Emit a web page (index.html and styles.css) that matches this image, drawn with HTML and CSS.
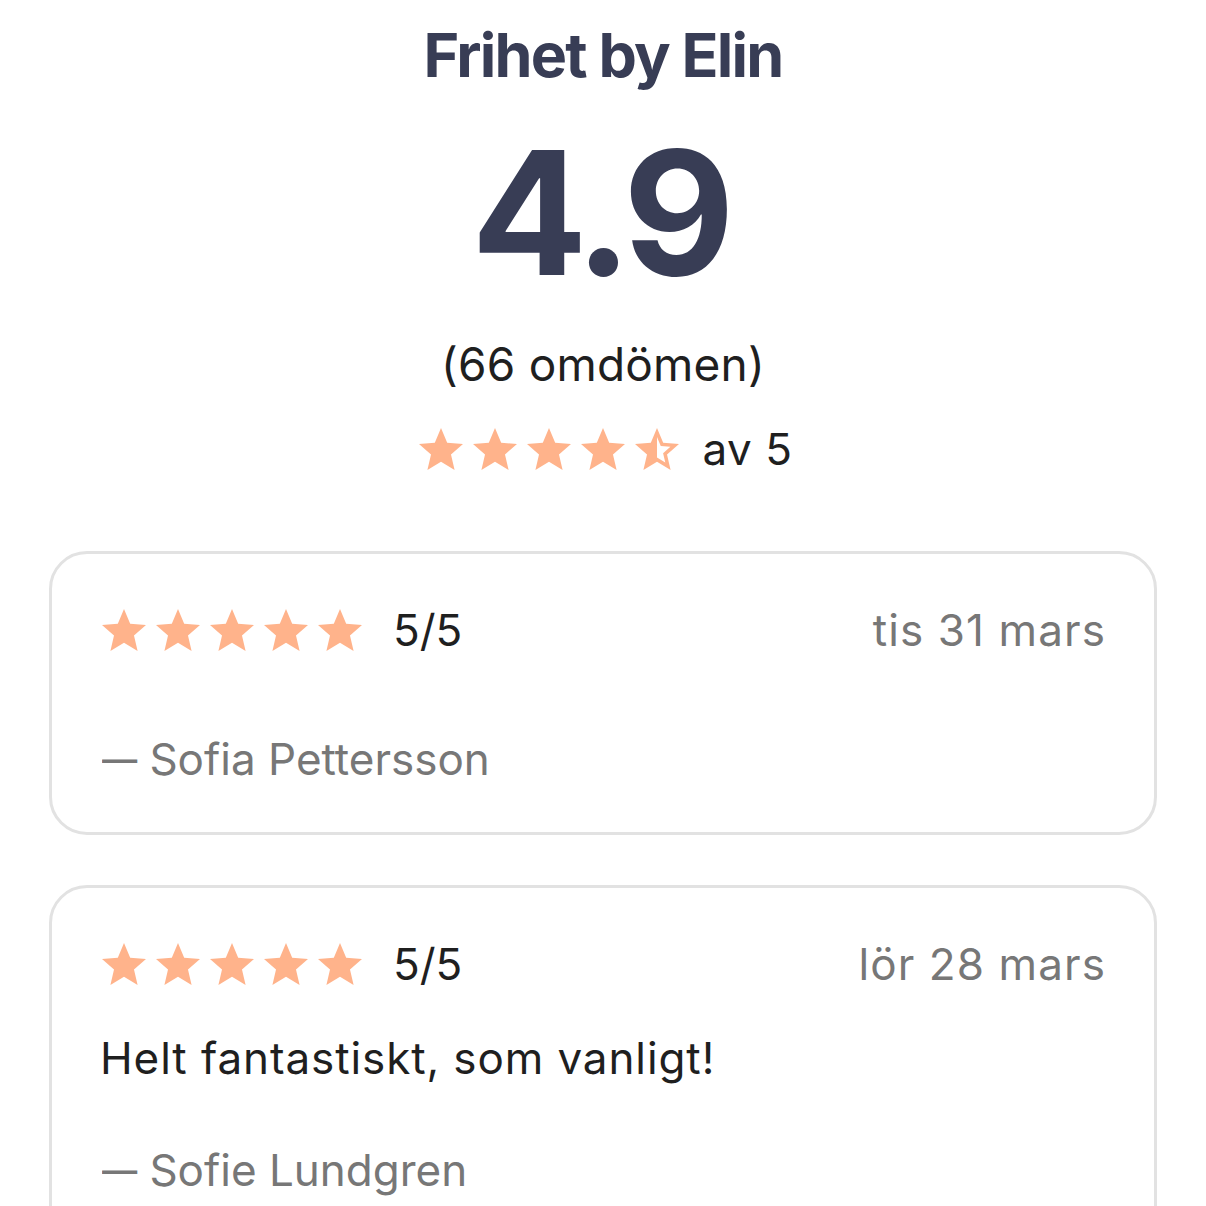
FILE: index.html
```html
<!DOCTYPE html>
<html lang="sv">
<head>
  <meta charset="UTF-8">
  <meta name="viewport" content="width=device-width, initial-scale=1">
  <title>Frihet by Elin – omdömen</title>
  <link rel="stylesheet" href="styles.css">
</head>
<body>

  <svg class="defs" width="0" height="0" aria-hidden="true">
    <defs>
      <path id="star" d="M12 17.27L18.18 21l-1.64-7.03L22 9.24l-7.19-.61L12 2 9.19 8.63 2 9.24l5.46 4.73L5.82 21z"/>
      <path id="star-half" d="M22 9.24l-7.19-.62L12 2 9.19 8.63 2 9.24l5.46 4.73L5.82 21 12 17.27 18.18 21l-1.63-7.03L22 9.24zM12 15.4V6.1l1.71 4.04 4.38.38-3.32 2.88 1 4.28L12 15.4z"/>
    </defs>
  </svg>

  <header class="summary">
    <h1 class="salon-name">Frihet by Elin</h1>
    <div class="score">4.9</div>
    <div class="count">(66 omdömen)</div>
    <div class="rating-row">
      <div class="stars">
        <svg class="star" viewBox="2 2 20 19"><use href="#star"/></svg>
        <svg class="star" viewBox="2 2 20 19"><use href="#star"/></svg>
        <svg class="star" viewBox="2 2 20 19"><use href="#star"/></svg>
        <svg class="star" viewBox="2 2 20 19"><use href="#star"/></svg>
        <svg class="star" viewBox="2 2 20 19"><use href="#star-half"/></svg>
      </div>
      <span class="rating-label">av 5</span>
    </div>
  </header>

  <main class="reviews">
    <div class="review-card">
      <div class="review-head">
        <div class="stars">
          <svg class="star" viewBox="2 2 20 19"><use href="#star"/></svg>
          <svg class="star" viewBox="2 2 20 19"><use href="#star"/></svg>
          <svg class="star" viewBox="2 2 20 19"><use href="#star"/></svg>
          <svg class="star" viewBox="2 2 20 19"><use href="#star"/></svg>
          <svg class="star" viewBox="2 2 20 19"><use href="#star"/></svg>
        </div>
        <span class="review-score">5/5</span>
        <span class="review-date">tis 31 mars</span>
      </div>
      <div class="review-author"><span class="dash">—</span> Sofia Pettersson</div>
    </div>

    <div class="review-card">
      <div class="review-head">
        <div class="stars">
          <svg class="star" viewBox="2 2 20 19"><use href="#star"/></svg>
          <svg class="star" viewBox="2 2 20 19"><use href="#star"/></svg>
          <svg class="star" viewBox="2 2 20 19"><use href="#star"/></svg>
          <svg class="star" viewBox="2 2 20 19"><use href="#star"/></svg>
          <svg class="star" viewBox="2 2 20 19"><use href="#star"/></svg>
        </div>
        <span class="review-score">5/5</span>
        <span class="review-date">lör 28 mars</span>
      </div>
      <p class="review-text">Helt fantastiskt, som vanligt!</p>
      <div class="review-author"><span class="dash">—</span> Sofie Lundgren</div>
    </div>
  </main>

</body>
</html>
```

FILE: styles.css
```css
body {
  margin: 0;
  font-family: Inter, 'Noto Sans', sans-serif;
  background: #ffffff;
  color: #1f1f1f;
}
.defs {
  position: absolute;
}
.summary {
  padding-top: 20px;
  text-align: center;
}
.salon-name {
  margin: 0;
  font-size: 61px;
  line-height: 70px;
  font-weight: 700;
  color: #383d55;
  letter-spacing: -1.8px;
}
.score {
  margin-top: 32px;
  font-size: 172px;
  line-height: 180px;
  font-weight: 700;
  color: #383d55;
  letter-spacing: -7px;
  text-indent: -7px;
}
.count {
  margin-top: 37px;
  font-size: 46px;
  line-height: 50px;
  letter-spacing: 0.2px;
}
.rating-row {
  margin-top: 38px;
  display: flex;
  justify-content: center;
  align-items: center;
  gap: 24px;
  padding-left: 5px;
}
.stars {
  display: flex;
  gap: 10px;
}
.star {
  width: 44px;
  height: 42px;
  fill: #ffb38b;
}
.rating-label {
  font-size: 44px;
  line-height: 44px;
  letter-spacing: 0.5px;
}
.reviews {
  margin-top: 80px;
  padding: 0 49px;
  display: flex;
  flex-direction: column;
  gap: 50px;
}
.review-card {
  border: 3px solid #e2e2e2;
  border-radius: 38px;
  padding: 54px 49px 48px 50px;
}
.review-head {
  display: flex;
  align-items: center;
  height: 44px;
}
.review-score {
  margin-left: 31px;
  font-size: 44px;
}
.review-date {
  margin-left: auto;
  font-size: 44px;
  color: #777777;
  letter-spacing: 1.1px;
  margin-right: -1px;
}
.review-text {
  margin: 47px 0 0 -2px;
  font-size: 44px;
  line-height: 50px;
  letter-spacing: 0.9px;
}
.review-author {
  margin-top: 62px;
  font-size: 44px;
  line-height: 50px;
  color: #777777;
}
.review-head + .review-author {
  margin-top: 82px;
}
.dash {
  display: inline-block;
  transform: scaleX(0.8);
  transform-origin: left center;
  margin-right: -9px;
}
```
